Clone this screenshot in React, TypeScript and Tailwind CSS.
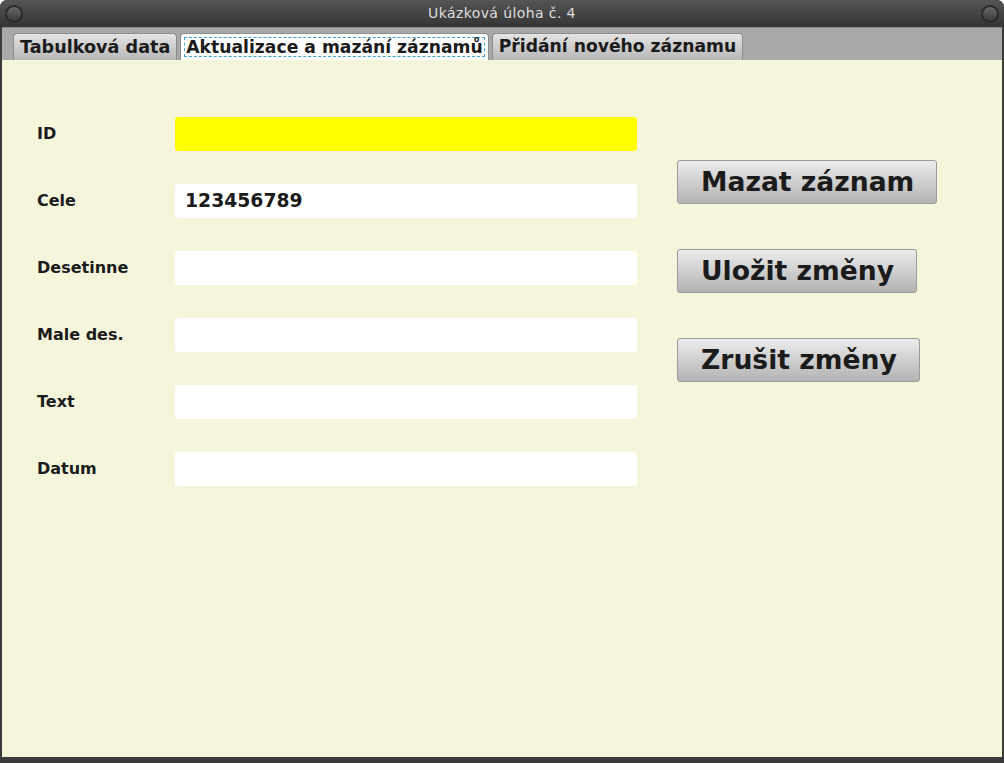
const fields = [
  { label: "ID", value: "", bg: "bg-[#ffff00]" },
  { label: "Cele", value: "123456789", bg: "bg-white" },
  { label: "Desetinne", value: "", bg: "bg-white" },
  { label: "Male des.", value: "", bg: "bg-white" },
  { label: "Text", value: "", bg: "bg-white" },
  { label: "Datum", value: "", bg: "bg-white" },
];

const buttons = [
  { text: "Mazat záznam", w: "w-[260px]" },
  { text: "Uložit změny", w: "w-[240px]" },
  { text: "Zrušit změny", w: "w-[243px]" },
];

const Knob = () => (
  <div className="h-[18px] w-[18px] rounded-full bg-[#2a2a2a] p-[2px]">
    <div className="h-full w-full rounded-full bg-gradient-to-b from-[#6a6a6a] to-[#3a3a3a]" />
  </div>
);

const App = () => {
  return (
    <div className="h-[763px] w-[1004px] bg-white font-['DejaVu_Sans',sans-serif]">
      <div className="flex h-full flex-col overflow-hidden rounded-t-[7px] bg-[#3b3b3b]">
        {/* title bar */}
        <div className="flex h-[27px] shrink-0 items-center justify-between bg-gradient-to-b from-[#555555] to-[#353535] px-[5px]">
          <Knob />
          <span className="text-[14px] tracking-[0.4px] text-[#dedede]">Ukázková úloha č. 4</span>
          <Knob />
        </div>

        <div className="mx-[2px] mb-[6px] flex flex-1 flex-col">
          {/* tab strip */}
          <div className="flex h-[33px] shrink-0 items-end gap-[3px] border-t border-[#8a8a8a] bg-[#a9a9a9] pl-[11px]">
            <div className="flex h-[27px] items-center rounded-t-[4px] border border-b-0 border-[#8c8c8c] bg-gradient-to-b from-[#e4e4e4] to-[#b7b7b7] px-[6px] text-[17.6px] font-bold text-[#1b1b1b]">
              Tabulková data
            </div>
            <div className="flex h-[27px] items-center rounded-t-[4px] border border-b-0 border-[#8c8c8c] bg-white px-[3px] text-[17.2px] font-bold text-[#1b1b1b]">
              <span className="border border-dashed border-[#3ba3d6] px-[1px] leading-[18px]">Aktualizace a mazání záznamů</span>
            </div>
            <div className="flex h-[27px] items-center rounded-t-[4px] border border-b-0 border-[#8c8c8c] bg-gradient-to-b from-[#e4e4e4] to-[#b7b7b7] px-[6px] text-[17.2px] font-bold text-[#1b1b1b]">
              Přidání nového záznamu
            </div>
          </div>

          {/* content */}
          <div className="flex flex-1 bg-[#f5f5dc] pl-[35px] pt-[57px]">
            <div className="flex flex-col gap-[33px]">
              {fields.map((f) => (
                <div key={f.label} className="flex items-center">
                  <span className="w-[138px] text-[16px] font-bold text-[#1b1b1b]">{f.label}</span>
                  <div className={`flex h-[34px] w-[462px] items-center rounded-[3px] px-[10px] text-[18.8px] font-bold text-[#1b1b1b] ${f.bg}`}>
                    {f.value}
                  </div>
                </div>
              ))}
            </div>
            <div className="ml-[40px] flex flex-col gap-[45px] pt-[43px]">
              {buttons.map((b) => (
                <div
                  key={b.text}
                  className={`flex h-[44px] items-center rounded-[3px] border border-[#9a9a9a] bg-gradient-to-b from-[#ececec] to-[#b3b3b3] pl-[23px] text-[26.6px] font-bold text-[#1b1b1b] ${b.w}`}
                >
                  {b.text}
                </div>
              ))}
            </div>
          </div>
        </div>
      </div>
    </div>
  );
};

export default App;
